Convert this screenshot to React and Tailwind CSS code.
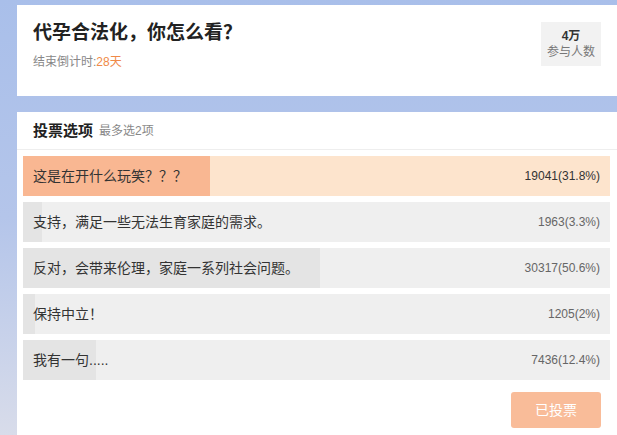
import React from 'react';

// vote options; pct drives the width of the filled part of each bar
const options = [
  { label: '这是在开什么玩笑？？？', count: '19041(31.8%)', pct: 31.8, picked: true },
  { label: '支持，满足一些无法生育家庭的需求。', count: '1963(3.3%)', pct: 3.3 },
  { label: '反对，会带来伦理，家庭一系列社会问题。', count: '30317(50.6%)', pct: 50.6 },
  { label: '保持中立！', count: '1205(2%)', pct: 2 },
  { label: '我有一句.....', count: '7436(12.4%)', pct: 12.4 },
];

const OptionRow = ({ label, count, pct, picked }) => (
  <div className={`relative h-[40px] flex items-center justify-between ${picked ? 'bg-[#fde4cd]' : 'bg-[#efefef]'}`}>
    <div
      className={`absolute left-0 top-0 bottom-0 ${picked ? 'bg-[#f9b792]' : 'bg-[#e4e4e4]'}`}
      style={{ width: `${pct}%` }}
    />
    <span className="relative pl-[10px] text-[14px] leading-[20px] text-[#333]">{label}</span>
    <span className={`relative pr-[10px] text-[12px] leading-[16px] ${picked ? 'text-[#333]' : 'text-[#666]'}`}>{count}</span>
  </div>
);

export default function App() {
  return (
    <div
      className="w-[617px] h-[435px] overflow-hidden flex flex-col pl-[17px] pt-[5px] bg-gradient-to-b from-[#a9bfea] via-[#b4c5ea] to-[#d8dcea]"
      style={{ fontFamily: '"Liberation Sans", "Noto Sans CJK SC", sans-serif' }}
    >
      {/* Title card */}
      <div className="h-[91px] bg-white flex justify-between pl-4 pr-4">
        <div className="pt-[16px]">
          <h1 className="text-[19px] leading-[24px] font-bold text-[#222]">代孕合法化，你怎么看？</h1>
          <p className="mt-[9px] text-[12px] leading-[16px] text-[#888]">
            结束倒计时:<span className="text-[#f08a48]">28天</span>
          </p>
        </div>
        <div className="mt-[17px] w-[60px] h-[44px] bg-[#f2f2f2] flex flex-col items-center justify-center">
          <span className="text-[12px] leading-[15px] font-bold text-[#333]">4万</span>
          <span className="text-[12px] leading-[16px] text-[#777]">参与人数</span>
        </div>
      </div>

      {/* Options card */}
      <div className="mt-4 flex-1 bg-white flex flex-col">
        <div className="h-[38px] flex items-center pl-4 border-b border-[#eeeeee]">
          <span className="text-[15px] leading-[20px] font-bold text-[#222]">投票选项</span>
          <span className="ml-[6px] text-[12px] leading-[16px] text-[#888]">最多选2项</span>
        </div>
        <div className="pl-[6px] pr-[7px] pt-[6px] flex flex-col gap-[6px]">
          {options.map((o) => (
            <OptionRow key={o.label} {...o} />
          ))}
        </div>
        <div className="flex justify-end pr-[16px] mt-[12px]">
          <button className="w-[90px] h-[36px] rounded-[3px] bg-[#f9bc99] text-white text-[14px]">已投票</button>
        </div>
      </div>
    </div>
  );
}
